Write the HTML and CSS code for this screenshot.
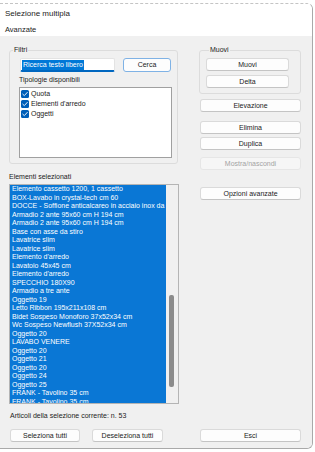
FILE: index.html
```html
<!DOCTYPE html>
<html lang="it">
<head>
<meta charset="utf-8">
<title>Selezione multipla</title>
<link rel="stylesheet" href="styles.css">
</head>
<body>
<div class="window">
  <div class="header">
    <div class="title">Selezione multipla</div>
    <div class="tab">Avanzate</div>
  </div>
  <div class="content">
    <div class="top">
      <div class="left">
        <div class="group filtri">
          <div class="group-title">Filtri</div>
          <div class="search-row">
            <div class="search"><span class="sel">Ricerca testo libero</span></div>
            <div class="btn cerca">Cerca</div>
          </div>
          <div class="label tip-label">Tipologie disponibili</div>
          <div class="checklist">
            <div class="check-row"><span class="cb"><svg viewBox="0 0 8 8" width="8" height="8"><path d="M1.8 4.2 L3.3 5.6 L6.3 2.4" fill="none" stroke="#fff" stroke-width="0.9" stroke-linecap="round" stroke-linejoin="round"/></svg></span>Quota</div>
            <div class="check-row"><span class="cb"><svg viewBox="0 0 8 8" width="8" height="8"><path d="M1.8 4.2 L3.3 5.6 L6.3 2.4" fill="none" stroke="#fff" stroke-width="0.9" stroke-linecap="round" stroke-linejoin="round"/></svg></span>Elementi d'arredo</div>
            <div class="check-row"><span class="cb"><svg viewBox="0 0 8 8" width="8" height="8"><path d="M1.8 4.2 L3.3 5.6 L6.3 2.4" fill="none" stroke="#fff" stroke-width="0.9" stroke-linecap="round" stroke-linejoin="round"/></svg></span>Oggetti</div>
          </div>
        </div>
        <div class="label sel-label">Elementi selezionati</div>
        <div class="listbox">
          <div class="items">
            <div class="item">Elemento cassetto 1200, 1 cassetto</div>
            <div class="item">BOX-Lavabo in crystal-tech cm 60</div>
            <div class="item">DOCCE - Soffione anticalcareo in acciaio inox da 30 cm</div>
            <div class="item">Armadio 2 ante 95x60 cm H 194 cm</div>
            <div class="item">Armadio 2 ante 95x60 cm H 194 cm</div>
            <div class="item">Base con asse da stiro</div>
            <div class="item">Lavatrice slim</div>
            <div class="item">Lavatrice slim</div>
            <div class="item">Elemento d'arredo</div>
            <div class="item">Lavatoio 45x45 cm</div>
            <div class="item">Elemento d'arredo</div>
            <div class="item">SPECCHIO 180X90</div>
            <div class="item">Armadio a tre ante</div>
            <div class="item">Oggetto 19</div>
            <div class="item">Letto Ribbon 195x211x108 cm</div>
            <div class="item">Bidet Sospeso Monoforo 37x52x34 cm</div>
            <div class="item">Wc Sospeso Newflush 37X52x34 cm</div>
            <div class="item">Oggetto 20</div>
            <div class="item">LAVABO VENERE</div>
            <div class="item">Oggetto 20</div>
            <div class="item">Oggetto 21</div>
            <div class="item">Oggetto 20</div>
            <div class="item">Oggetto 24</div>
            <div class="item">Oggetto 25</div>
            <div class="item">FRANK - Tavolino 35 cm</div>
            <div class="item">FRANK - Tavolino 35 cm</div>
          </div>
          <div class="scrollbar"><div class="thumb"></div></div>
        </div>
        <div class="label count">Articoli della selezione corrente: n. 53</div>
      </div>
      <div class="right">
        <div class="group muovi">
          <div class="group-title">Muovi</div>
          <div class="btn gbtn b-muovi">Muovi</div>
          <div class="btn gbtn b-delta">Delta</div>
        </div>
        <div class="btn rbtn b-elev">Elevazione</div>
        <div class="btn rbtn b-elim">Elimina</div>
        <div class="btn rbtn b-dup">Duplica</div>
        <div class="btn rbtn b-mostra disabled">Mostra/nascondi</div>
        <div class="btn rbtn b-opz">Opzioni avanzate</div>
      </div>
    </div>
    <div class="bottom">
      <div class="btn b-sel">Seleziona tutti</div>
      <div class="btn b-desel">Deseleziona tutti</div>
      <div class="btn b-esci">Esci</div>
    </div>
  </div>
</div>
</body>
</html>
```

FILE: styles.css
```css
* { box-sizing: border-box; }
body {
  margin: 0;
  background: #ffffff;
  font-family: "Liberation Sans", Arial, sans-serif;
  color: #1b1b1b;
  font-size: 7px;
}
.window {
  margin-top: 3px;
  width: 313px;
  height: 446px;
  border-top: 1px dashed #c4c4c4;
  border-right: 1px solid #a9a9a9;
  border-bottom: 1px solid #a9a9a9;
  border-top-right-radius: 6px;
  border-bottom-right-radius: 6px;
  overflow: hidden;
  display: flex;
  flex-direction: column;
}
.header {
  background: #ffffff;
  height: 32px;
  padding: 4px 0 0 5px;
}
.title {
  font-size: 8px;
  line-height: 12px;
}
.tab {
  margin-top: 5px;
  font-size: 7.5px;
  line-height: 10px;
}
.content {
  flex: 1;
  background: #f0f0f0;
  padding: 14px 0 0 9px;
}
.top {
  display: flex;
}
.left {
  width: 170px;
}
.right {
  width: 102px;
  margin-left: 20px;
}
.group {
  border: 1px solid #dcdcdc;
  border-radius: 3px;
}
.group-title {
  width: fit-content;
  margin: -6px 0 0 3px;
  padding: 0 1px;
  background: #f0f0f0;
  line-height: 10px;
  font-size: 7px;
}
.filtri {
  width: 169px;
  padding-bottom: 5px;
}
.search-row {
  display: flex;
  margin: 3px 0 0 10px;
}
.search {
  width: 95px;
  height: 14px;
  background: #ffffff;
  border: 1px solid #e3e3e3;
  border-bottom: 2px solid #0067c0;
  border-radius: 2px;
  padding: 1px 0 0 1px;
  line-height: 9px;
}
.sel {
  display: inline-block;
  background: #0078d7;
  color: #ffffff;
  padding: 0 1px;
  line-height: 10px;
}
.btn {
  height: 13px;
  background: #fdfdfd;
  border: 1px solid #dadada;
  border-bottom-color: #c4c4c4;
  border-radius: 3px;
  text-align: center;
  line-height: 11px;
  font-size: 7px;
  color: #1b1b1b;
}
.cerca {
  width: 48px;
  height: 14px;
  margin-left: 8px;
  border-color: #7fb2e5;
  line-height: 12px;
}
.label {
  line-height: 10px;
}
.tip-label {
  margin: 3px 0 0 9px;
}
.checklist {
  margin: 2px 0 0 9px;
  width: 153px;
  height: 71px;
  background: #ffffff;
  border: 1px solid #a0a0a0;
  padding: 0 0 0 1px;
}
.check-row {
  display: flex;
  align-items: center;
  height: 10px;
  line-height: 10px;
}
.check-row:first-child {
  margin-top: 1px;
}
.cb {
  width: 8px;
  height: 8px;
  background: #005fb8;
  border-radius: 1.5px;
  margin-right: 2px;
  display: flex;
}
.sel-label {
  margin-top: 8px;
}
.listbox {
  margin-top: 2px;
  width: 170px;
  height: 220px;
  border: 1px solid #b4b4b4;
  display: flex;
  overflow: hidden;
}
.items {
  width: 156px;
  background: #0a77d5;
  color: #ffffff;
  padding-left: 2px;
  overflow: hidden;
}
.item {
  height: 8.5px;
  line-height: 8.5px;
  white-space: nowrap;
}
.scrollbar {
  flex: 1;
  background: #f0f0f0;
  padding-left: 3px;
}
.thumb {
  width: 5px;
  height: 92px;
  margin-top: 110px;
  background: #8b8b8b;
  border-radius: 2px;
}
.count {
  margin-top: 7px;
  margin-left: 1px;
}
.muovi {
  height: 44px;
  padding-left: 6px;
}
.gbtn {
  width: 83px;
}
.b-muovi {
  margin-top: 3px;
}
.b-delta {
  margin-top: 4px;
}
.rbtn {
  width: 101px;
  margin-left: 1px;
}
.b-elev { margin-top: 5px; }
.b-elim { margin-top: 9px; }
.b-dup { margin-top: 3px; }
.b-mostra { margin-top: 7px; }
.b-opz { margin-top: 17px; }
.disabled {
  background: #f6f6f6;
  border-color: #e6e6e6;
  color: #a3a3a3;
}
.bottom {
  display: flex;
  margin-top: 8px;
}
.b-sel {
  width: 70px;
  margin-left: 1px;
}
.b-desel {
  width: 71px;
  margin-left: 12px;
}
.b-esci {
  width: 101px;
  margin-left: 37px;
}
```
